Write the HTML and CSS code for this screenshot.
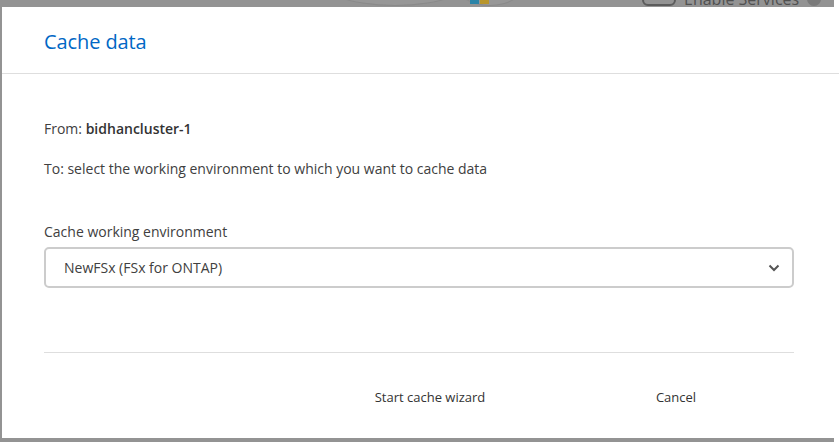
FILE: index.html
```html
<!DOCTYPE html>
<html>
<head>
<meta charset="utf-8">
<link rel="stylesheet" href="styles.css">
</head>
<body>
<div class="screen">
  <div class="backdrop">
    <div class="bg-circle bg-c1"></div>
    <div class="bg-circle bg-c2"></div>
    <div class="bg-logo"><span class="sq teal"></span><span class="sq gold"></span></div>
    <div class="bg-services"><span class="bg-toggle"></span><span class="bg-text">Enable Services</span><span class="bg-dot"></span></div>
  </div>
  <div class="modal">
    <div class="modal-header">
      <h1 class="title">Cache data</h1>
    </div>
    <div class="modal-body">
      <p class="line">From: <span class="strong">bidhancluster-1</span></p>
      <p class="line">To: select the working environment to which you want to cache data</p>
      <div class="field">
        <label class="label">Cache working environment</label>
        <div class="select">
          <span class="select-value">NewFSx (FSx for ONTAP)</span>
          <svg class="chevron" width="12" height="8" viewBox="0 0 12 8"><path d="M1.5 1.5 L6 6 L10.5 1.5" fill="none" stroke="#555" stroke-width="2"/></svg>
        </div>
      </div>
    </div>
    <div class="modal-footer">
      <button class="btn">Start cache wizard</button>
      <button class="btn">Cancel</button>
    </div>
  </div>
</div>
</body>
</html>
```
FILE: styles.css
```css
* { box-sizing: border-box; }
html, body { margin: 0; padding: 0; background: #fff; }
body { font-family: "Open Sans", "Noto Sans", sans-serif; color: #404040; }
.screen {
  position: relative;
  width: 839px;
  height: 446px;
  overflow: hidden;
}
.backdrop {
  position: absolute;
  left: 0; top: 0;
  width: 834px; height: 442px;
  background: #939393;
}
.bg-circle {
  position: absolute;
  border-radius: 50%;
  border: 1px solid #8a8a8a;
  background: #979797;
}
.bg-c1 { left: 310px; top: -60px; width: 170px; height: 66px; }
.bg-c2 { left: 455px; top: -40px; width: 70px; height: 46px; }
.bg-logo { position: absolute; left: 470px; top: -3px; display: flex; gap: 1px; }
.sq { display: block; width: 9px; height: 7px; }
.teal { background: #2b84a8; }
.gold { background: #b8952b; }
.bg-services {
  position: absolute;
  left: 642px; top: -12px;
  display: flex;
  align-items: center;
  gap: 8px;
  white-space: nowrap;
}
.bg-toggle { width: 34px; height: 14px; border: 2px solid #5c5c5c; border-radius: 6px; }
.bg-text { font-size: 16px; color: #505050; }
.bg-dot { width: 14px; height: 14px; border-radius: 50%; background: #7a7a7a; }
.modal {
  position: absolute;
  left: 2px; top: 7px;
  width: 860px; height: 431px;
  background: #fff;
  display: flex;
  flex-direction: column;
}
.modal-header {
  height: 67px;
  border-bottom: 1px solid #dedede;
  padding: 2px 0 0 42px;
  display: flex;
  align-items: center;
}
.title {
  margin: 0;
  font-weight: 400;
  font-size: 20px;
  color: #0067c5;
  letter-spacing: -0.1px;
}
.modal-body {
  width: 792px;
  padding: 45px 0 0 42px;
  display: flex;
  flex-direction: column;
}
.line {
  margin: 0 0 20px 0;
  font-size: 14px;
  line-height: 20px;
  color: #404040;
}
.strong { font-weight: 600; color: #333; }
.field { margin-top: 23px; display: flex; flex-direction: column; }
.label { font-size: 14px; line-height: 20px; margin-bottom: 5px; color: #404040; }
.select {
  height: 41px;
  border: 2px solid #cccccc;
  border-radius: 5px;
  display: flex;
  align-items: center;
  justify-content: space-between;
  padding: 0 12px 0 18px;
}
.select-value { font-size: 14px; color: #404040; }
.modal-footer {
  width: 750px;
  margin-left: 42px;
  margin-top: 64px;
  border-top: 1px solid #dedede;
  padding-top: 29px;
  display: flex;
  justify-content: flex-end;
  gap: 10px;
}
.btn {
  width: 236px;
  height: 30px;
  border: none;
  background: transparent;
  font-family: "Open Sans", "Noto Sans", sans-serif;
  font-size: 13px;
  color: #333;
  padding: 0;
}
```
